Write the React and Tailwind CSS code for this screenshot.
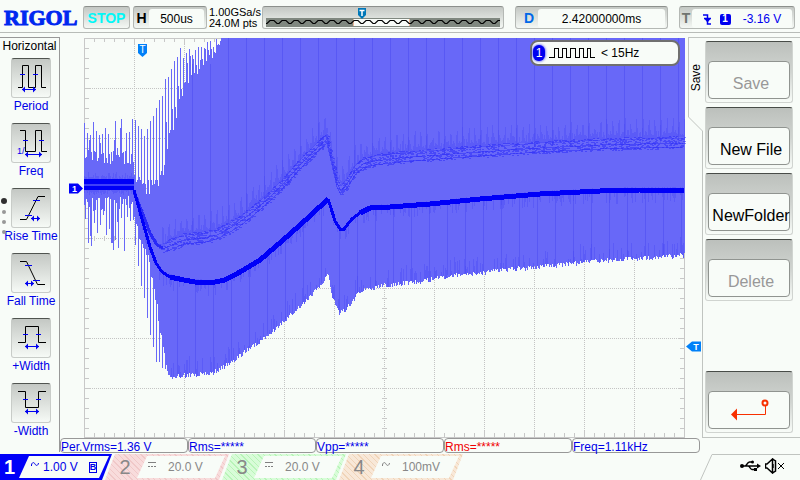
import React from "react";

/* ---------- waveform data ---------- */

function makeRandom(seed) {
  let s = seed;
  return () => {
    s = (s * 1664525 + 1013904223) % 4294967296;
    return s / 4294967296;
  };
}

function at(points, x) {
  if (x <= points[0][0]) return points[0][1];
  for (let i = 1; i < points.length; i++) {
    const [x1, y1] = points[i];
    if (x <= x1) {
      const [x0, y0] = points[i - 1];
      return y0 + ((y1 - y0) * (x - x0)) / (x1 - x0);
    }
  }
  return points[points.length - 1][1];
}

const toLine = (points, dy = 0) => points.map(([x, y]) => `${x},${y + dy}`).join(" ");

const BOTTOM = [[170, 375], [210, 372], [217, 369], [230, 361], [250, 347], [275, 328], [300, 305], [320, 285], [328, 272], [332, 296], [339, 312], [345, 309], [352, 299], [360, 290], [385, 284], [420, 280], [440, 276], [480, 271], [533, 266], [603, 259], [684, 254]];
const BOTTOM_DEEP = [[134, 240], [140, 285], [148, 330], [155, 362], [162, 378], [172, 378]];
const BOTTOM_GAP = [[134, 215], [140, 235], [148, 252], [155, 290], [163, 345], [170, 374]];
const TOP_TALL = [[134, 118], [142, 128], [150, 118], [158, 98], [166, 72], [172, 60], [180, 48], [190, 44], [205, 40], [221, 38]];
const TOP_GAP = [[134, 185], [145, 195], [157, 192], [164, 175], [171, 138], [177, 116], [184, 96], [190, 84], [205, 66], [216, 62], [221, 38]];
const TRACE = [[134, 190], [142, 219], [150, 247], [156, 263], [162, 272], [170, 277], [184, 280], [195, 282], [210, 283], [225, 280], [240, 272], [260, 260], [290, 234], [310, 216], [328, 199], [331, 208], [335, 221], [340, 229], [344, 229], [352, 219], [360, 213], [370, 208], [390, 207], [430, 204], [480, 199], [540, 194], [600, 191], [640, 190], [684, 190]];
const GHOST = [[134, 192], [142, 212], [150, 233], [157, 245], [163, 248], [172, 244], [184, 239], [205, 237], [217, 234], [230, 227], [240, 221], [255, 209], [270, 196], [285, 181], [300, 164], [315, 149], [327, 138], [332, 160], [337, 182], [341, 190], [347, 183], [355, 170], [363, 163], [375, 160], [400, 157], [440, 154], [480, 151], [540, 147], [600, 144], [684, 142]];

function buildWave() {
  const rnd = makeRandom(77);
  let body = "";
  let speck = "";
  let soft = "";
  for (let x = 84; x < 685; x++) {
    let top = 38;
    let bottom;
    if (x < 134) {
      top = x % 3 === 0 || rnd() < 0.15 ? 112 + rnd() * 42 : 150 + rnd() * 15;
      bottom = x % 3 === 1 || rnd() < 0.15 ? 212 + rnd() * 40 : 196 + rnd() * 16;
    } else {
      if (x < 221) {
        const tall = at(TOP_TALL, x);
        const gap = at(TOP_GAP, x);
        const phase = x % 3;
        top = phase === 0 ? tall + rnd() * 12 : phase === 1 && x > 160 ? tall + (0.3 + rnd() * 0.7) * (gap - tall) : gap - rnd() * 14;
      }
      if (x < 170) {
        const deep = at(BOTTOM_DEEP, x);
        const gap = at(BOTTOM_GAP, x);
        bottom = x % 3 === 0 ? deep - rnd() * 10 : gap + rnd() * 10;
      } else {
        bottom = at(BOTTOM, x) + rnd() * 5 - 1;
      }
    }
    top = Math.round(top);
    bottom = Math.round(bottom);
    body += `M${x} ${top}h1V${bottom}h-1z`;

    if (x < 134) {
      soft += `M${x} ${Math.round(172 + rnd() * 8)}h1V${Math.round(189 + rnd() * 6)}h-1z`;
    } else {
      const g = Math.round(at(GHOST, x));
      const half = x < 165 ? 2 : 6;
      if (x > 160) {
        const lift = x % 6 < 2 ? 10 + rnd() * 14 : rnd() * 9;
        soft += `M${x} ${Math.round(g - half - lift * 0.8)}h1V${g - half + 1}h-1z`;
      }
      for (let k = -half; k <= half; k++) {
        if (rnd() < 0.24) speck += `M${x} ${g + k}h2v1h-2z`;
      }
      const t = Math.round(at(TRACE, x));
      if (rnd() < 0.3) soft += `M${x} ${t - 3}h1v${Math.round(8 + rnd() * 8)}h-1z`;
      if (rnd() < 0.35 && x > 170) soft += `M${x} ${bottom - Math.round(4 + rnd() * 14)}h1V${bottom}h-1z`;
    }
  }
  let bars = "";
  for (let x = 192; x < 685; x += 18) bars += `M${x} ${x < 220 ? 64 : 38}h1V${Math.round(at(GHOST, x))}h-1z`;
  for (let x = 177; x < 685; x += 18) bars += `M${x} ${Math.round(at(TRACE, x))}h1V${Math.round(at(BOTTOM, x))}h-1z`;
  return { body, speck, soft, bars };
}

const WAVE = buildWave();

function buildGrid() {
  let ticks = "";
  for (let x = 94; x < 684; x += 10) {
    const n = (x - 84) % 50 === 0 ? 6 : 4;
    ticks += `M${x}.5 38v${n}M${x}.5 437v-${n}M${x}.5 236v5`;
  }
  for (let y = 48; y < 438; y += 10) {
    const n = (y - 38) % 50 === 0 ? 6 : 4;
    ticks += `M85 ${y}.5h${n}M684 ${y}.5h-${n}M382 ${y}.5h5`;
  }
  let dots = "";
  for (let x = 134; x < 684; x += 50) dots += `M${x}.5 38V437`;
  for (let y = 88; y < 438; y += 50) dots += `M84 ${y}.5H684`;
  return { ticks, dots };
}

const GRID = buildGrid();

function Plot() {
  return (
    <div className="relative min-w-0 flex-1">
      <svg viewBox="60 33 628 405" className="block h-auto w-full overflow-visible" role="img" aria-label="Channel 1 waveform">
        <g shapeRendering="crispEdges">
          <path d={GRID.dots} stroke="#c4c4c4" strokeDasharray="1 1" fill="none" />
          <path d={GRID.ticks} stroke="#c8c8c8" fill="none" />
          <path d="M84.5 38.5H684.5V437.5H84.5z" stroke="#c8c8c8" fill="none" />
          <path d={WAVE.body} fill="#6868f8" />
          <path d={WAVE.bars} fill="#5858f4" />
          <path d={WAVE.soft} fill="#4848f4" fillOpacity="0.4" />
          <path d={WAVE.speck} fill="#2828f8" fillOpacity="0.5" />
          <path d="M84 179h50v5h-50zM84 186h50v4h-50z" fill="#0000f8" />
          <path d="M84 184h50v2h-50z" fill="#4040f8" />
          <g fill="none" stroke="#2828f8">
            <polyline points={toLine(GHOST.slice(0, 5))} strokeWidth="3" />
            <polyline points={toLine(GHOST.slice(4), -4)} strokeOpacity="0.35" />
            <polyline points={toLine(GHOST.slice(4), 1)} strokeOpacity="0.5" />
            <polyline points={toLine(GHOST.slice(4), 5)} strokeOpacity="0.5" />
          </g>
          <g fill="none" stroke="#0000f8">
            <polyline points={toLine(TRACE.slice(0, 6))} strokeWidth="3" />
            <polyline points={toLine(TRACE.slice(5, 15))} strokeWidth="5" />
            <polyline points={toLine(TRACE.slice(14, 21))} strokeWidth="3" />
            <polyline points={toLine(TRACE.slice(20))} strokeWidth="5" />
          </g>
        </g>
        <path d="M138 44h9v9l-4.500 4l-4.500-4z" fill="#0080f8" />
        <path d="M69 183.500h9l5 5l-5 5h-9z" fill="#0000f8" />
        <path d="M701 341.500h-9l-6 5l6 5h9z" fill="#0080f8" />
        <g fontFamily="Liberation Sans, sans-serif" fill="#fff" textAnchor="middle">
          <text x="142.500" y="53" fontSize="10">T</text>
          <text x="74.500" y="192" fontSize="9" fontWeight="bold">1</text>
          <text x="696" y="350" fontSize="9" fontWeight="bold">T</text>
        </g>
      </svg>
      <div className="absolute right-2 top-[7px] flex h-[26px] w-[150px] items-center rounded-lg border-2 border-[#707070] bg-[#f8fcf8] pl-px">
        <span className="flex h-4 w-3 items-center justify-center rounded-full bg-[#0000f0] text-xs text-white shadow-[0_0_3px_#0000f8]">1</span>
        <svg width="46" height="12" viewBox="0 0 46 12" className="ml-1" aria-hidden="true">
          <path d="M0 10.500H5.500V1.500H9.500V10.500H13.500V1.500H17.500V10.500H21.500V1.500H26.500V10.500H30.500V1.500H34.500V10.500H38.500V1.500H41.500V10.500H46" fill="none" stroke="#000" shapeRendering="crispEdges" />
        </svg>
        <span className="ml-1.5 leading-4">&lt; 15Hz</span>
      </div>
    </div>
  );
}

/* ---------- header ---------- */

const field = "flex h-[23px] shrink-0 rounded-[3px] border border-[#b4b8b4] border-t-[#8c908c] bg-linear-to-b from-[#c4c8c4] to-[#f4f8f4]";
const fieldValue = "mt-[2px] mr-[2px] flex flex-1 items-center justify-center rounded-[3px] bg-[#f8fcf8] pt-px";

const MEMORY_WAVE = Array.from({ length: 20 }, (_, i) => `${i === 0 ? "M0 5.5" : ""}h1l3 -3h4l3 3h1`).join("");

function Header() {
  return (
    <header className="flex h-[33px] items-center border-b border-[#b8bcb8] pl-1 pr-[5px] pt-[3px]">
      <div className="w-[79px] shrink-0 font-['Liberation_Serif',serif] text-[22px] leading-6 font-bold text-[#0028f0] [-webkit-text-stroke:1px_#0028f0]">RIGOL</div>
      <button type="button" className={`${field} w-[47px] items-center justify-center text-sm leading-5 font-bold text-[#00f8f8]`}>
        STOP
      </button>
      <div className={`${field} ml-[3px] w-[74px]`}>
        <span className="flex w-[15px] items-center justify-center text-sm font-bold">H</span>
        <span className={fieldValue}>500us</span>
      </div>
      <div className="ml-[2px] w-[53px] shrink-0 text-[11px] leading-[11px] whitespace-nowrap">
        <div>1.00GSa/s</div>
        <div>24.0M pts</div>
      </div>
      <div className={`${field} relative w-[242px]`}>
        <svg viewBox="0 0 234 9" className="absolute left-[3px] top-[11px] h-[9px] w-[234px]" aria-hidden="true">
          <rect width="234" height="9" fill="#808880" />
          <rect x="87" y="1" width="57" height="7" fill="#f8fcf8" />
          <path d="M87.500 1v7M143.500 1v7" stroke="#e8b898" />
          <path d={MEMORY_WAVE} fill="none" stroke="#000" strokeWidth="1.200" />
        </svg>
        <svg viewBox="0 0 8 11" className="absolute left-[95px] top-px h-[11px] w-2" aria-hidden="true">
          <path d="M0 0h8v7l-4 4l-4-4z" fill="#0078b8" />
          <path d="M1.500 2.500h5M4 2v6" stroke="#fff" strokeWidth="1.500" />
        </svg>
      </div>
      <div className={`${field} ml-[11px] w-[153px]`}>
        <span className="flex w-[22px] items-center justify-center pl-1 text-sm font-bold text-[#0068e8]">D</span>
        <span className={fieldValue}>2.42000000ms</span>
      </div>
      <div className={`${field} ml-auto w-[116px] text-[#0000f0]`}>
        <span className="flex w-3 items-center justify-center text-sm font-bold text-[#707470]">T</span>
        <span className={fieldValue}>
          <svg width="9" height="11" viewBox="0 0 9 11" className="mr-2" aria-hidden="true">
            <path d="M0 1h4.500V10H8M1 4.500h7" fill="none" stroke="#0000f0" strokeWidth="1.500" />
            <path d="M1.500 5h6l-3 3.500z" fill="#0000f0" />
          </svg>
          <span className="mr-3 flex h-[11px] w-[11px] items-center justify-center rounded-[2px] bg-[#0000f0] text-[10px] font-bold leading-3 text-white">1</span>
          -3.16 V
        </span>
      </div>
    </header>
  );
}

/* ---------- measurement menu ---------- */

function Arrow({ a, b, y }) {
  return (
    <>
      <path d={`M${a} ${y}H${b}`} stroke="#0000f0" />
      <path d={`M${a} ${y}l3 -3v6zM${b} ${y}l-3 -3v6z`} fill="#0000f0" />
    </>
  );
}

const MEASURES = [
  { name: "Period", line: "M7 29.5H11.5V7.5H17.5V29.5H24.5V7.5H30.5V29.5H35", ticks: "M9 16.500h5M22 16.500h5", arrow: [11, 25, 31.5] },
  { name: "Freq", line: "M9 7.5H14.5V28.5H24.5V7.5H30.5V28.5H36", ticks: "M12 17.500h5M28 17.500h5", arrow: [14, 31, 31.5], prefix: "1/" },
  { name: "Rise Time", line: "M9 31.5H15.5L27 8.5H34", ticks: "M22 12.500h7M14 27.500h7", arrow: [20, 29, 30.5] },
  { name: "Fall Time", line: "M9 8.5H15.5L26.5 31.5H34", ticks: "M14 12.500h7M22 27.500h7", arrow: [14, 23, 30.5] },
  { name: "+Width", line: "M7 24.5H14.5V8.5H27.5V24.5H35", ticks: "M12 16.500h5M25 16.500h5", arrow: [14, 28, 28.5] },
  { name: "-Width", line: "M7 8.5H14.5V24.5H27.5V8.5H35", ticks: "M12 16.500h5M25 16.500h5", arrow: [14, 28, 28.5] },
];

function MeasureMenu() {
  return (
    <aside className="relative mt-1 mb-px w-[60px] shrink-0 border-t border-r border-[#989898]">
      <h2 className="text-center leading-4">Horizontal</h2>
      <div className="flex flex-col pt-1 pl-[3px]">
        {MEASURES.map((m) => (
          <button key={m.name} type="button" className="flex h-[65px] flex-col items-center text-[#0000e8]">
            <span className="block h-10 w-10 rounded-[3px] border border-[#c8ccc8] border-t-[#505450] bg-linear-to-b from-[#c4c8c4] to-[#f6faf6]">
              <svg viewBox="1 1 38 38" className="block h-full w-full" fill="none" aria-hidden="true">
                <path d={m.line} stroke="#000" />
                <path d={m.ticks} stroke="#0000f0" />
                <Arrow a={m.arrow[0]} b={m.arrow[1]} y={m.arrow[2]} />
                {m.prefix && <text x="6" y="31" fontSize="9" fill="#0000f0">{m.prefix}</text>}
              </svg>
            </span>
            <span className="leading-4 whitespace-nowrap">{m.name}</span>
          </button>
        ))}
      </div>
      <div className="absolute left-px top-[160px] flex flex-col items-center gap-[6px]" aria-hidden="true">
        <i className="h-1.5 w-1.5 rounded-full bg-[#303030]" />
        <i className="h-1 w-1 rounded-full bg-[#989898]" />
        <i className="h-1 w-1 rounded-full bg-[#989898]" />
        <i className="h-1 w-1 rounded-full bg-[#989898]" />
      </div>
    </aside>
  );
}

/* ---------- save menu ---------- */

const keyCap = "flex h-full w-full items-center justify-center rounded-[4px] border border-[#909490] bg-[#f8fcf8] whitespace-nowrap";

function SoftKey({ label, disabled, children, className = "" }) {
  return (
    <button
      type="button"
      disabled={disabled}
      aria-label={label}
      className={`flex h-[62px] w-[88px] shrink-0 rounded-[3px] border border-[#d0d4d0] border-t-[#484c48] bg-linear-to-b from-[#bcc0bc] via-[#d0d4d0] to-[#f8fcf8] px-[2px] pt-[19px] pb-[3px] text-base disabled:text-[#989898] ${className}`}
    >
      {children ? <span className={keyCap}>{children}</span> : <span className={`${keyCap} pt-2 pl-1`}>{label}</span>}
    </button>
  );
}

function SaveMenu() {
  return (
    <aside className="mt-1 flex shrink-0">
      <div className="flex w-[15px] flex-col">
        <div className="flex h-20 items-center justify-center border-t border-l border-[#c0c4c0]">
          <h2 className="rotate-180 leading-3 [writing-mode:vertical-rl]">Save</h2>
        </div>
        <svg viewBox="0 0 15 14" className="block h-[14px] w-[15px]" aria-hidden="true">
          <path d="M0.500 0L14.500 14" stroke="#c0c4c0" />
        </svg>
        <div className="flex-1 border-r border-[#c0c4c0]" />
      </div>
      <div className="flex w-[97px] flex-col gap-1 border-y border-[#c0c4c0] pt-[3px] pb-1 pl-[2px]">
        <SoftKey label="Save" disabled />
        <SoftKey label="New File" />
        <SoftKey label="NewFolder" />
        <SoftKey label="Delete" disabled />
        <SoftKey label="Back" className="mt-auto">
          <svg width="40" height="22" viewBox="0 0 40 22" fill="none" aria-hidden="true">
            <circle cx="36" cy="4" r="2.500" stroke="#f83000" strokeWidth="2" />
            <path d="M36.500 7V15.500H6" stroke="#f83000" />
            <path d="M2 15.500l6-6v12z" fill="#f83000" />
          </svg>
        </SoftKey>
      </div>
    </aside>
  );
}

/* ---------- readouts and channels ---------- */

const READOUTS = [
  { text: "Per.Vrms=1.36 V", tone: "text-[#0000e8]" },
  { text: "Rms=*****", tone: "text-[#0000e8]" },
  { text: "Vpp=*****", tone: "text-[#0000e8]" },
  { text: "Rms=*****", tone: "text-[#f00000]" },
  { text: "Freq=1.11kHz", tone: "text-[#0000e8]" },
];

const slant = "[clip-path:polygon(10px_0,100%_0,calc(100%-10px)_100%,0_100%)]";

const CHANNELS = [
  { n: 2, coupling: "dc", value: "20.0 V", fill: "bg-[repeating-linear-gradient(45deg,#f8dcdc_0_3px,#f0c8c8_3px_4px)]" },
  { n: 3, coupling: "dc", value: "20.0 V", fill: "bg-[repeating-linear-gradient(45deg,#d8fcd8_0_3px,#b8f4b8_3px_4px)]" },
  { n: 4, coupling: "ac", value: "100mV", fill: "bg-[repeating-linear-gradient(45deg,#f8e8d8_0_3px,#f0d4b8_3px_4px)]" },
];

function Coupling({ kind, color }) {
  return (
    <svg width="8" height="7" viewBox="0 0 8 7" fill="none" stroke={color} className="mb-1.5" aria-label={kind}>
      {kind === "ac" ? <path d="M0.500 5V4C1 1 3 1 4 3S7 5 7.500 2" /> : <path d="M0 1.500h8M0 5.500h2M3 5.500h2M6 5.500h2" />}
    </svg>
  );
}

function Footer() {
  return (
    <footer className="flex h-[27px] items-stretch pt-px">
      <button type="button" className="flex w-[112px] shrink-0 bg-[#0000f8] py-[2px] [clip-path:polygon(0_0,100%_0,calc(100%-10px)_100%,0_100%)]">
        <span className="flex h-full w-[19px] items-center justify-center text-xl font-bold text-white">1</span>
        <span className={`flex h-full w-[90px] items-center bg-[#f8fcf8] pl-3 text-[#0000e8] ${slant}`}>
          <Coupling kind="ac" color="#0000e8" />
          <span className="ml-1 w-[46px] text-left">1.00 V</span>
          <span className="flex h-[11px] w-2 items-center justify-center border border-[#0000e8] text-[9px] leading-[9px] font-bold">B</span>
        </span>
      </button>
      {CHANNELS.map((c) => (
        <button key={c.n} type="button" className={`-ml-[7px] flex w-[124px] shrink-0 py-[2px] text-[#888888] ${slant} ${c.fill}`}>
          <span className="flex h-full w-8 items-center justify-center pl-2 text-xl">{c.n}</span>
          <span className={`flex h-full w-[88px] items-center bg-[#f8fcf8] pl-[11px] ${slant}`}>
            <Coupling kind={c.coupling} color="#808080" />
            <span className="ml-3">{c.value}</span>
          </span>
        </button>
      ))}
      <div className="ml-auto flex">
        <svg viewBox="0 0 12 26" className="h-[26px] w-3" aria-hidden="true">
          <path d="M0.500 26L12 0.500" stroke="#c0c4c0" fill="none" />
        </svg>
        <div className="flex w-[88px] items-center gap-1 border-t border-[#c0c4c0] pb-1 pl-7">
          <svg width="21" height="13" viewBox="0 0 21 13" fill="none" aria-label="USB">
            <path d="M2 7H19M5 7C7 7 7 3 9.500 3H12M8 7C10 7 10 10.500 12 10.500H15" stroke="#000" strokeWidth="1.500" />
            <circle cx="2" cy="7" r="2" fill="#000" />
            <circle cx="12.500" cy="3" r="1.500" fill="#000" />
            <path d="M17 4.500l4 2.500l-4 2.500zM14 9h3v3h-3z" fill="#000" />
          </svg>
          <svg width="20" height="16" viewBox="0 0 20 16" fill="none" stroke="#000" aria-label="Muted">
            <path d="M0.500 6V10H2L7.500 15V1L2 6zM7.500 1L10.500 3V13L7.500 15M8 6v4" strokeWidth="1.500" />
            <path d="M13 5l6 6M19 5l-6 6" />
          </svg>
        </div>
      </div>
    </footer>
  );
}

export default function App() {
  return (
    <div className="flex flex-col bg-[#f8fcf8] font-['Liberation_Sans',Arial,sans-serif] text-xs text-black">
      <Header />
      <main className="flex">
        <MeasureMenu />
        <div className="flex min-w-0 flex-1 flex-col">
          <div className="flex">
            <Plot />
            <SaveMenu />
          </div>
          <div className="mr-[100px] flex">
            {READOUTS.map((r, i) => (
              <div key={i} className={`flex h-[15px] min-w-0 flex-1 items-center rounded-[4px] border border-[#989898] pt-[2px] leading-3 whitespace-nowrap ${r.tone}`}>
                {r.text}
              </div>
            ))}
          </div>
        </div>
      </main>
      <Footer />
    </div>
  );
}
